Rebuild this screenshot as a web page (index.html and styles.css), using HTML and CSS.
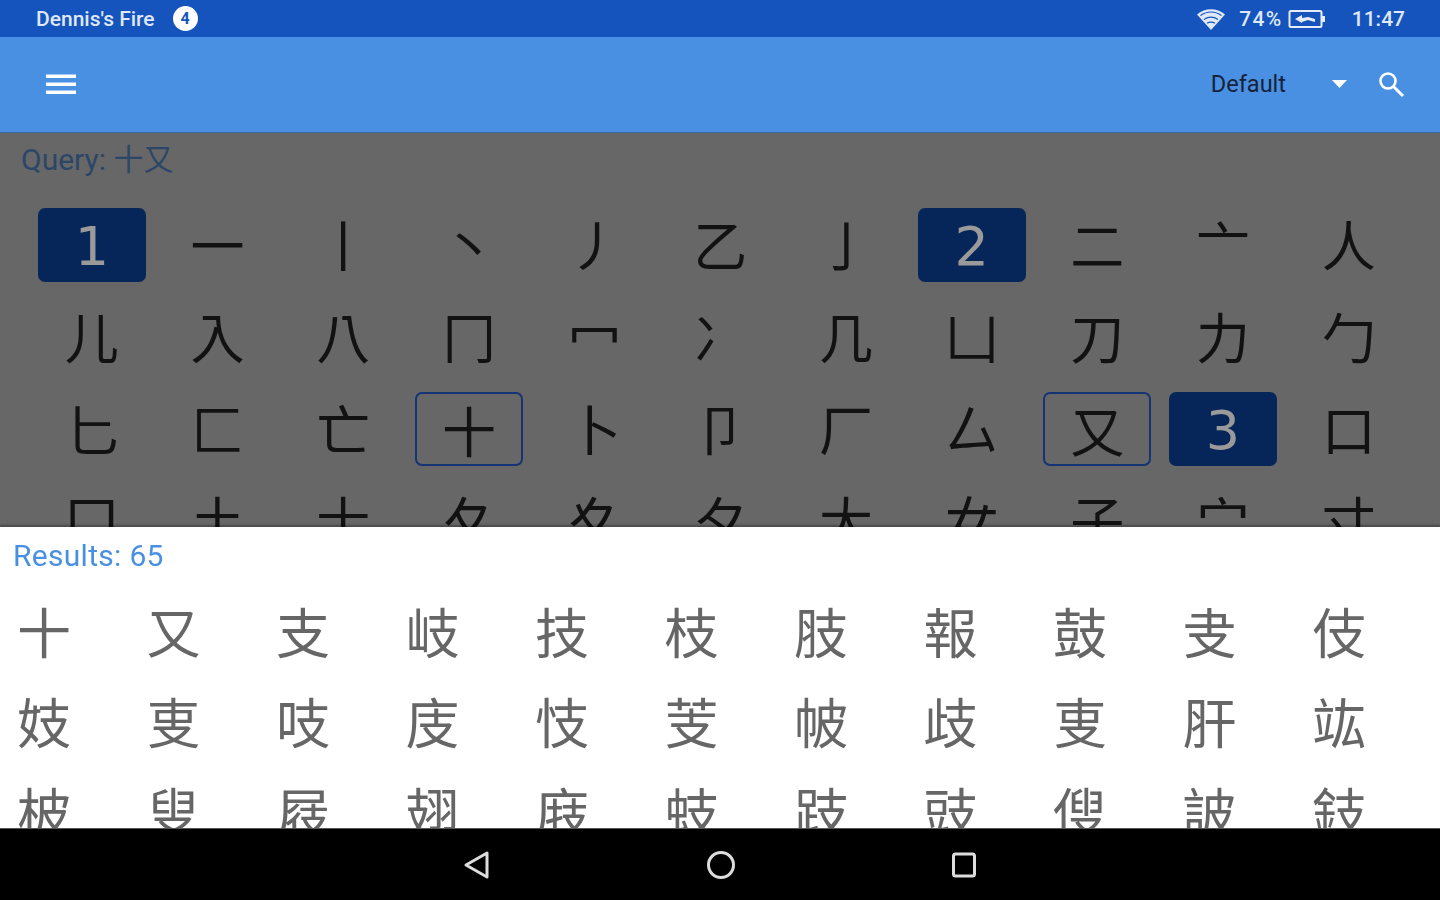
FILE: index.html
```html
<!DOCTYPE html>
<html lang="zh-Hant">
<head>
<meta charset="utf-8">
<title>Radical lookup</title>
<link rel="stylesheet" href="styles.css">
</head>
<body>
<div class="screen">
  <header class="status">
    <div class="status-left">
      <span class="status-text">Dennis's Fire</span>
      <span class="badge">4</span>
    </div>
    <div class="status-right">
      <svg class="wifi" width="30" height="24" viewBox="0 0 30 24"><path d="M15 23 1 7.500C9 .5 21 .5 29 7.500Z" fill="#dfe8f8"/><path d="M4.500 8.500C11 3.800 19 3.800 25.500 8.500M8 12.500C12.500 9.500 17.500 9.500 22 12.500M11 16.300C13.500 14.800 16.500 14.800 19 16.300" fill="none" stroke="#1554bc" stroke-width="1.200"/></svg>
      <span class="status-text pct">74%</span>
      <svg class="battery" width="38" height="20" viewBox="0 0 38 20"><rect x="1.500" y="2" width="32" height="16" rx="1.500" fill="none" stroke="#e6edf9" stroke-width="2"/><rect x="34" y="7" width="3" height="6" fill="#e6edf9"/><path d="M7 10 14 6v3l6-1 7 2v3l-7-2-6 2v1Z" fill="#e6edf9"/></svg>
      <span class="status-text time">11:47</span>
    </div>
  </header>

  <div class="appbar">
    <svg class="menu" width="30" height="20" viewBox="0 0 30 20"><path d="M0 .5h30v3.500H0zM0 8.500h30v3.500H0zM0 16.500h30v3.500H0z" fill="#fff"/></svg>
    <span class="variant">Default</span>
    <svg class="caret" width="15" height="8" viewBox="0 0 15 8"><path d="M0 0h15L7.500 8Z" fill="#fff"/></svg>
    <svg class="search" width="30" height="30" viewBox="0 0 30 30"><circle cx="12" cy="12" r="7.500" fill="none" stroke="#fff" stroke-width="2.600"/><path d="M17.500 17.500 27 27" stroke="#fff" stroke-width="3"/></svg>
  </div>

  <main class="picker">
    <div class="query">Query: 十又</div>
    <div class="radicals">
      <span class="rad"><b class="chip solid">1</b></span><span class="rad">一</span><span class="rad">丨</span><span class="rad">丶</span><span class="rad">丿</span><span class="rad">乙</span><span class="rad">亅</span><span class="rad"><b class="chip solid">2</b></span><span class="rad">二</span><span class="rad">亠</span><span class="rad">人</span>
      <span class="rad">儿</span><span class="rad">入</span><span class="rad">八</span><span class="rad">冂</span><span class="rad">冖</span><span class="rad">冫</span><span class="rad">几</span><span class="rad">凵</span><span class="rad">刀</span><span class="rad">力</span><span class="rad">勹</span>
      <span class="rad">匕</span><span class="rad">匚</span><span class="rad">亡</span><span class="rad"><b class="chip outline">十</b></span><span class="rad">卜</span><span class="rad">卩</span><span class="rad">厂</span><span class="rad">厶</span><span class="rad"><b class="chip outline">又</b></span><span class="rad"><b class="chip solid">3</b></span><span class="rad">口</span>
      <span class="rad">囗</span><span class="rad">土</span><span class="rad">士</span><span class="rad">夂</span><span class="rad">夊</span><span class="rad">夕</span><span class="rad">大</span><span class="rad">女</span><span class="rad">子</span><span class="rad">宀</span><span class="rad">寸</span>
    </div>
  </main>

  <section class="results">
    <div class="count">Results: 65</div>
    <div class="hanzi">
      <span>十</span><span>又</span><span>支</span><span>岐</span><span>技</span><span>枝</span><span>肢</span><span>報</span><span>鼓</span><span>叏</span><span>伎</span>
      <span>妓</span><span>叓</span><span>吱</span><span>庋</span><span>忮</span><span>芰</span><span>帔</span><span>歧</span><span>叓</span><span>肝</span><span>竑</span>
      <span>柀</span><span>叟</span><span>屐</span><span>翅</span><span>庪</span><span>蚑</span><span>跂</span><span>豉</span><span>傁</span><span>詖</span><span>鈘</span>
    </div>
  </section>

  <nav class="navbar">
    <svg width="30" height="30" viewBox="0 0 30 30"><path d="M24 3V27L3 15Z" fill="none" stroke="#ddd" stroke-width="3" stroke-linejoin="round"/></svg>
    <svg width="30" height="30" viewBox="0 0 30 30"><circle cx="15" cy="15" r="12.500" fill="none" stroke="#ddd" stroke-width="3"/></svg>
    <svg width="30" height="30" viewBox="0 0 30 30"><rect x="4.500" y="4" width="21" height="22" rx="2" fill="none" stroke="#ddd" stroke-width="3"/></svg>
  </nav>
</div>
</body>
</html>
```
FILE: styles.css
```css
* { box-sizing: border-box; }
html, body { margin: 0; padding: 0; background: #000; }
body { font-family: Roboto, "Noto Sans CJK TC", sans-serif; }

.screen {
  width: 1440px;
  height: 900px;
  display: flex;
  flex-direction: column;
  overflow: hidden;
  filter: blur(0.7px);
}

.status {
  flex: 0 0 37px;
  background: #1554bc;
  display: flex;
  align-items: center;
  justify-content: space-between;
  padding: 0 35px 0 36px;
}
.status-left, .status-right { display: flex; align-items: center; }
.status-text { color: #dfe8f8; font-size: 21px; font-weight: 500; }
.badge {
  width: 25px;
  height: 25px;
  margin-left: 18px;
  border-radius: 50%;
  background: #fff;
  color: #1554bc;
  font-size: 16px;
  font-weight: 700;
  display: flex;
  align-items: center;
  justify-content: center;
}
.wifi { margin-right: 13px; }
.pct { letter-spacing: 1.4px; }
.battery { margin-left: 5px; }
.time { margin-left: 26px; }

.appbar {
  flex: 0 0 96px;
  background: #4a90e2;
  display: flex;
  align-items: center;
  padding: 0 34px 1px 46px;
  border-bottom: 1px solid #44689a;
}
.menu { margin-right: auto; }
.variant { color: #14233a; font-size: 23.500px; font-weight: 400; margin-right: 46px; }
.caret { margin-right: 29px; }

.picker {
  flex: 0 0 394px;
  background: #676767;
  overflow: hidden;
}
.query {
  height: 66px;
  padding: 10px 0 0 21px;
  color: #2c4668;
  font-size: 30px;
  line-height: 34px;
}
.radicals {
  display: grid;
  grid-template-columns: repeat(11, 125.7px);
  grid-auto-rows: 92px;
  padding-left: 29px;
}
.rad {
  display: flex;
  align-items: center;
  justify-content: center;
  padding-bottom: 2px;
  color: #121212;
  font-family: "Noto Sans CJK TC", sans-serif;
  font-size: 54px;
  font-weight: 400;
  line-height: 1;
}
.chip {
  width: 108px;
  height: 74px;
  margin-bottom: -2px;
  border-radius: 7px;
  display: flex;
  align-items: center;
  justify-content: center;
  font-weight: inherit;
}
.solid {
  background: #062558;
  color: #9a9a9a;
  font-family: "DejaVu Sans", sans-serif;
  font-size: 54px;
  padding-top: 4px;
}
.outline { border: 2px solid #143474; padding-top: 2px; }

.results {
  flex: 0 0 301px;
  background: #fff;
  overflow: hidden;
  box-shadow: 0 -2px 2px rgba(0, 0, 0, .3);
}
.count {
  height: 61px;
  padding: 12px 0 0 13px;
  color: #4a90e2;
  font-size: 30px;
  line-height: 34px;
  letter-spacing: .3px;
}
.hanzi {
  display: grid;
  grid-template-columns: repeat(11, 129.5px);
  grid-auto-rows: 90px;
  padding-left: 17px;
}
.hanzi span {
  display: flex;
  align-items: center;
  padding-bottom: 4px;
  color: #666;
  font-family: "Noto Sans CJK TC", sans-serif;
  font-size: 54px;
  font-weight: 400;
  line-height: 1;
}

.navbar {
  flex: 0 0 72px;
  background: #000;
  border-top: 1px solid #555;
  display: flex;
  align-items: center;
  justify-content: center;
  gap: 213px;
  padding-left: 2px;
}
```
